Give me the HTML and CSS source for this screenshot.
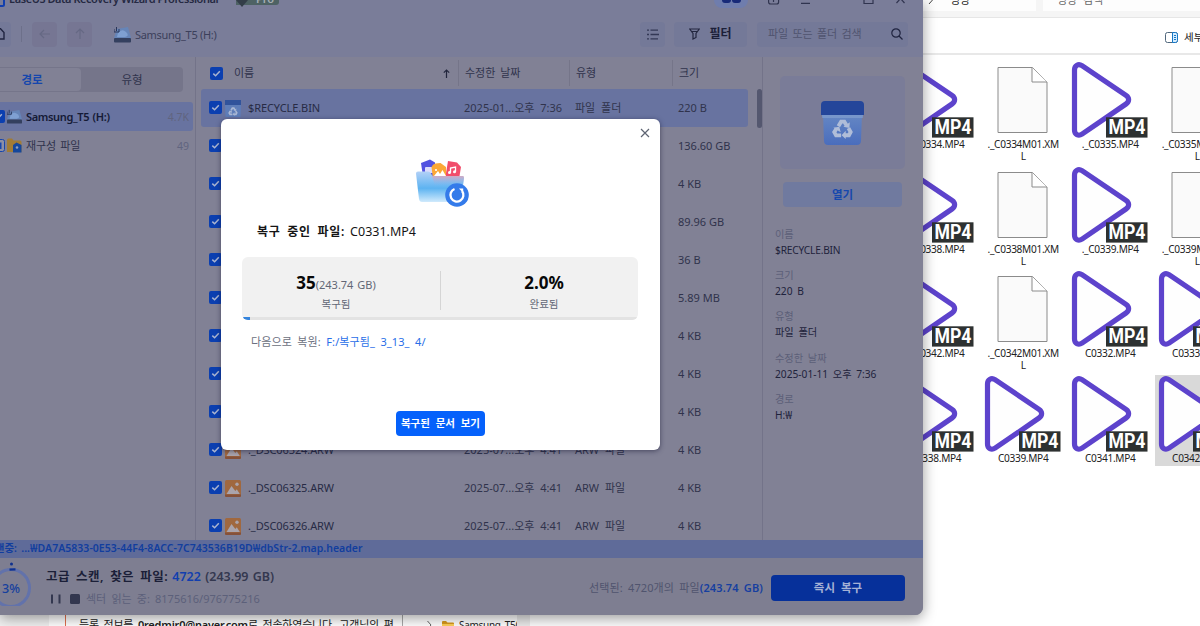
FILE: index.html
```html
<!DOCTYPE html>
<html lang="ko">
<head>
<meta charset="utf-8">
<title>EaseUS Data Recovery Wizard</title>
<link rel="stylesheet" href="styles.css">
</head>
<body>
<svg class="defs" width="0" height="0" aria-hidden="true">
  <defs>
    <linearGradient id="gBin" x1="0" y1="0" x2="0" y2="1"><stop offset="0" stop-color="#6688c4"/><stop offset="1" stop-color="#4a6dbd"/></linearGradient>
    <linearGradient id="gBox" x1="0" y1="0" x2="0" y2="1"><stop offset="0" stop-color="#b3d1f7"/><stop offset=".55" stop-color="#5db3f1"/><stop offset="1" stop-color="#d0eafc"/></linearGradient>
    <linearGradient id="gHot" x1="0" y1="0" x2="0" y2="1"><stop offset="0" stop-color="#d6a6be" stop-opacity=".9"/><stop offset="1" stop-color="#7fb4ee" stop-opacity="0"/></linearGradient>
    <symbol id="check" viewBox="0 0 13 13"><rect width="13" height="13" rx="2" fill="#0b3fb0"/><path d="M3.3 6.6l2.3 2.2 4.2-4.5" fill="none" stroke="#a9b4d0" stroke-width="1.5"/></symbol>
    <symbol id="photo" viewBox="0 0 16 17"><rect width="16" height="17" rx="1.5" fill="#a0683f"/><path d="M0 14.500h16v1a1.500 1.500 0 0 1-1.500 1.500h-13a1.500 1.500 0 0 1-1.500-1.500z" fill="#85513a"/><path d="M1.500 14l5-8 3.800 5 1.500-1.700 3 4.700z" fill="#aaa4ac"/><circle cx="12" cy="4.200" r="1.700" fill="#aaa4ac"/></symbol>
    <symbol id="recycle" viewBox="0 0 24 24"><g fill="none" stroke="currentColor" stroke-width="4.200"><path d="M7.500 9l3-5h3.500l2.500 4.200M18.500 11l2.400 4.300-1.900 3.500h-4.500M10.500 19H5l-2-3.600 2.500-4"/></g><g fill="currentColor"><path d="M13 9.500l6.500 1.500.5-6.500zM15.500 14v9l-4.500-4.300zM2 10.500l6.500-1 1.500 6z"/></g></symbol>
    <symbol id="bin" viewBox="0 0 43 44"><path d="M2 12h39l-1 28q-.3 4-4 4H7q-3.700 0-4-4z" fill="url(#gBin)"/><path d="M0 14V4q0-4 4-4h35q4 0 4 4v10z" fill="#24469a"/><path d="M1 14h41l-.3 3H1.300z" fill="#7796cb"/></symbol>
    <symbol id="drive" viewBox="0 0 17 17"><path d="M3 3l11-2 3 11H0z" fill="#6685b8"/><path d="M4 7q4-5 8-1t-1 5H3z" fill="#7fa0d2"/><rect y="12" width="17" height="4.500" rx="1" fill="#34405f"/><path d="M2.500 1v4M0 3v3h5V3" fill="none" stroke="#28365a"/></symbol>
    <symbol id="mp4" viewBox="0 0 80 80"><path d="M5.500 9v60c0 4.700 4 6.500 7.500 4.200l44-30.200c3.500-2.400 3.500-6.200 0-8.600L13 4.700C9.500 2.300 5.500 4.300 5.500 9z" fill="#fefefe" stroke="#5d43cc" stroke-width="5.200"/><rect x="37" y="56.300" width="41.500" height="20.300" fill="#2d3131"/><text x="39.500" y="73" textLength="37" lengthAdjust="spacingAndGlyphs" class="mp4-text">MP4</text></symbol>
    <symbol id="doc" viewBox="0 0 80 80"><path d="M15.500 6.500H50L64.500 21v50.500h-49z" transform="translate(.5 0)" fill="#fafafa" stroke="#8b8b8b"/><path d="M50 6.500v14.500h15" fill="#fff" stroke="#8b8b8b"/></symbol>
  </defs>
</svg>

<main class="desktop">
  <section class="explorer">
    <div class="ex-address"><div class="ex-path"><svg width="6" height="8" viewBox="0 0 6 8"><path d="M1 0l3.500 4L1 8" fill="none" stroke="#444"/></svg><span>영상</span></div><div class="ex-search">영상 검색</div></div>
    <div class="ex-tools"><svg width="13" height="11" viewBox="0 0 13 11"><rect x=".5" y=".5" width="12" height="10" rx="2" fill="#fff" stroke="#50677c"/><path d="M7.500.5h3a2 2 0 0 1 2 2v6a2 2 0 0 1-2 2h-3z" fill="#d6edff" stroke="#1677c5"/><path d="M9 3.500h2M9 5.500h2M9 7.500h2" stroke="#1677c5"/></svg><span>세부</span></div>
    <div class="ex-grid">
      <div class="file"><svg><use href="#mp4"/></svg><span>._C0334.MP4</span></div>
      <div class="file"><svg><use href="#doc"/></svg><span>._C0334M01.XM<br>L</span></div>
      <div class="file"><svg><use href="#mp4"/></svg><span>._C0335.MP4</span></div>
      <div class="file"><svg><use href="#doc"/></svg><span>._C0335M01.XM<br>L</span></div>
      <div class="file"><svg><use href="#mp4"/></svg><span>._C0338.MP4</span></div>
      <div class="file"><svg><use href="#doc"/></svg><span>._C0338M01.XM<br>L</span></div>
      <div class="file"><svg><use href="#mp4"/></svg><span>._C0339.MP4</span></div>
      <div class="file"><svg><use href="#doc"/></svg><span>._C0339M01.XM<br>L</span></div>
      <div class="file"><svg><use href="#mp4"/></svg><span>._C0342.MP4</span></div>
      <div class="file"><svg><use href="#doc"/></svg><span>._C0342M01.XM<br>L</span></div>
      <div class="file"><svg><use href="#mp4"/></svg><span>C0332.MP4</span></div>
      <div class="file"><svg><use href="#mp4"/></svg><span>C0333.MP4</span></div>
      <div class="file"><svg><use href="#mp4"/></svg><span>C0338.MP4</span></div>
      <div class="file"><svg><use href="#mp4"/></svg><span>C0339.MP4</span></div>
      <div class="file"><svg><use href="#mp4"/></svg><span>C0341.MP4</span></div>
      <div class="file picked"><svg><use href="#mp4"/></svg><span>C0342.MP4</span></div>
    </div>
  </section>

  <section class="behind">
    <div class="mail"><p>등록 정보를 <b>0redmir0@naver.com</b>로 전송하였습니다. 고객님의 편</p></div>
    <div class="nav-tree"><svg width="5" height="8" viewBox="0 0 5 8"><path d="M.5 0L4 4 .5 8" fill="none" stroke="#666"/></svg><svg width="12" height="10" viewBox="0 0 12 10"><path d="M0 1q0-1 1-1h3l1.500 1.500H11q1 0 1 1V10H0z" fill="#d99a1e"/><path d="M0 3h12v7H0z" fill="#ffd058"/></svg><span>Samsung_T5(H:)</span></div>
    <div class="nav-edge"></div>
  </section>

  <section class="app">
    <header class="titlebar">
      <svg width="5" height="10" viewBox="0 0 5 10"><path d="M0 6h2.500q1.500 0 1.500-1.500V0" fill="none" stroke="#123fae" stroke-width="2"/></svg>
      <span class="app-name">EaseUS Data Recovery Wizard Professional</span>
      <span class="badge"><svg width="12" height="9" viewBox="0 0 12 9"><path d="M0 2h12L6 9z" fill="#333d48"/></svg><b>Pro</b></span>
      <span class="avatar"><i></i><i></i></span>
      <svg class="win-icons" width="140" height="10" viewBox="0 0 140 10"><g fill="none" stroke="#30344f" stroke-width="1.200"><path d="M.6 0v4q0 2 2 2h6q2 0 2-2V0M5.500 0v4M33 5.300h9M96 0v5.500h9V0"/><path d="M128.500 5l4-4.500 4 4.500"/></g></svg>
    </header>
    <div class="toolbar">
      <span class="tool home"><svg width="6" height="12" viewBox="0 0 6 12"><path d="M-2 .8L.5.8 4 4.500V11h-6" fill="none" stroke="#202440" stroke-width="1.400"/></svg></span>
      <i class="tool-sep"></i>
      <span class="tool nav"><svg width="12" height="12" viewBox="0 0 12 12"><path d="M11 6H1.500M5 2L1 6l4 4" fill="none" stroke="#666984" stroke-width="1.200"/></svg></span>
      <span class="tool nav"><svg width="12" height="12" viewBox="0 0 12 12"><path d="M6 11V1.500M2 5l4-4 4 4" fill="none" stroke="#666984" stroke-width="1.200"/></svg></span>
      <span class="crumb"><svg width="17" height="17"><use href="#drive"/></svg><span>Samsung_T5 (H:)</span></span>
      <span class="tool list"><svg width="12" height="11" viewBox="0 0 12 11"><path d="M0 1.200h2M3.500 1.200H11M0 5.500h2M3.500 5.500H12M0 9.800h2M3.500 9.800H11" stroke="#333855" stroke-width="1.300"/></svg></span>
      <span class="tool filter"><svg width="11" height="12" viewBox="0 0 11 12"><path d="M.7 1h9.600L7 5.500v4L4 11V5.500z" fill="none" stroke="#22263f" stroke-width="1.200"/><path d="M3 3.500h5" stroke="#22263f"/></svg><b>필터</b></span>
      <span class="tool search"><span>파일 또는 폴더 검색</span><svg width="12" height="12" viewBox="0 0 12 12"><circle cx="5" cy="5" r="4.200" fill="none" stroke="#202440" stroke-width="1.200"/><path d="M8 8l3.500 3.500" stroke="#202440" stroke-width="1.200"/></svg></span>
    </div>

    <div class="body">
      <aside class="side">
        <div class="tabs"><b class="tab on">경로</b><span class="tab">유형</span></div>
        <div class="node sel"><svg class="cb" width="13" height="13"><use href="#check"/></svg><svg width="15" height="15"><use href="#drive"/></svg><b>Samsung_T5 (H:)</b><em>4.7K</em></div>
        <div class="node"><svg class="cb" width="13" height="13" viewBox="0 0 13 13"><rect x=".5" y=".5" width="12" height="12" rx="2" fill="#8c8fa5" stroke="#1746ad"/><rect x="3" y="3.500" width="6.500" height="6.500" fill="#1746ad"/></svg><svg width="15" height="15" viewBox="0 0 15 15"><path d="M0 2q0-1.500 1.500-1.500H5L6.500 2.500H13q1.500 0 1.500 1.500v10H0z" fill="#a17c36"/><path d="M6 7l3.500-2.500 5 2.500V14.500H6z" fill="#15479b"/><circle cx="10" cy="9.500" r="1.300" fill="#8fa0c0"/></svg><span class="node-name">재구성 파일</span><em>49</em></div>
      </aside>

      <div class="table">
        <div class="thead"><svg width="13" height="13"><use href="#check"/></svg><span class="h-name">이름</span><svg class="sort" width="7" height="9" viewBox="0 0 7 9"><path d="M3.500 9V1M.8 3.700l2.700-2.700 2.700 2.700" fill="none" stroke="#22263d" stroke-width="1.200"/></svg><span class="h-date">수정한 날짜</span><span class="h-type">유형</span><span class="h-size">크기</span></div>
        <div class="row on"><svg width="13" height="13"><use href="#check"/></svg><span class="bin-small"><svg width="16" height="17" viewBox="0 0 16 17"><path d="M0 0h16v5H0z" fill="#31539b"/><path d="M0 5h16l-.5 12H.5z" fill="#5e7db8"/><g transform="translate(3 6.500)" color="#aab8d4"><use href="#recycle" width="10" height="10"/></g></svg></span><span class="name">$RECYCLE.BIN</span><span class="date">2025-01...오후 7:36</span><span class="type">파일 폴더</span><span class="size">220 B</span></div>
        <div class="row"><svg width="13" height="13"><use href="#check"/></svg><i></i><span class="name"></span><span class="date"></span><span class="type"></span><span class="size">136.60 GB</span></div>
        <div class="row"><svg width="13" height="13"><use href="#check"/></svg><i></i><span class="name"></span><span class="date"></span><span class="type"></span><span class="size">4 KB</span></div>
        <div class="row"><svg width="13" height="13"><use href="#check"/></svg><i></i><span class="name"></span><span class="date"></span><span class="type"></span><span class="size">89.96 GB</span></div>
        <div class="row"><svg width="13" height="13"><use href="#check"/></svg><i></i><span class="name"></span><span class="date"></span><span class="type"></span><span class="size">36 B</span></div>
        <div class="row"><svg width="13" height="13"><use href="#check"/></svg><i></i><span class="name"></span><span class="date"></span><span class="type"></span><span class="size">5.89 MB</span></div>
        <div class="row"><svg width="13" height="13"><use href="#check"/></svg><i></i><span class="name"></span><span class="date"></span><span class="type"></span><span class="size">4 KB</span></div>
        <div class="row"><svg width="13" height="13"><use href="#check"/></svg><i></i><span class="name"></span><span class="date"></span><span class="type"></span><span class="size">4 KB</span></div>
        <div class="row"><svg width="13" height="13"><use href="#check"/></svg><i></i><span class="name"></span><span class="date"></span><span class="type"></span><span class="size">4 KB</span></div>
        <div class="row"><svg width="13" height="13"><use href="#check"/></svg><svg width="16" height="17"><use href="#photo"/></svg><span class="name">._DSC06324.ARW</span><span class="date">2025-07...오후 4:41</span><span class="type">ARW 파일</span><span class="size">4 KB</span></div>
        <div class="row"><svg width="13" height="13"><use href="#check"/></svg><svg width="16" height="17"><use href="#photo"/></svg><span class="name">._DSC06325.ARW</span><span class="date">2025-07...오후 4:41</span><span class="type">ARW 파일</span><span class="size">4 KB</span></div>
        <div class="row"><svg width="13" height="13"><use href="#check"/></svg><svg width="16" height="17"><use href="#photo"/></svg><span class="name">._DSC06326.ARW</span><span class="date">2025-07...오후 4:41</span><span class="type">ARW 파일</span><span class="size">4 KB</span></div>
      </div>
      <i class="scroll"></i>

      <aside class="detail">
        <div class="preview"><svg width="43" height="44" viewBox="0 0 43 44"><use href="#bin"/><g transform="translate(10.500 17)" color="#b0bdd8"><use href="#recycle" width="22" height="22"/></g></svg></div>
        <b class="open">열기</b>
        <dl>
          <dt>이름</dt><dd class="latin">$RECYCLE.BIN</dd>
          <dt>크기</dt><dd>220 B</dd>
          <dt>유형</dt><dd>파일 폴더</dd>
          <dt>수정한 날짜</dt><dd>2025-01-11 오후 7:36</dd>
          <dt>경로</dt><dd>H:₩</dd>
        </dl>
      </aside>
    </div>

    <div class="scanning"><span>스캔중: ...₩DA7A5833-0E53-44F4-8ACC-7C743536B19D₩dbStr-2.map.header</span></div>
    <footer class="foot">
      <svg class="ring" width="40" height="44" viewBox="-9 0 40 44"><circle cx="11" cy="26" r="18.500" fill="none" stroke="#6272ab" stroke-width="3"/><path d="M9.500 7.600l6-.3" stroke="#10318f" stroke-width="2.200"/><circle cx="11.500" cy="2" r="1.500" fill="#10318f"/><text x="2" y="31" class="ring-text" textLength="18" lengthAdjust="spacingAndGlyphs">3%</text></svg>
      <div class="progress"><div class="p-title"><span class="found">고급 스캔, 찾은 파일:</span> <b>4722</b> <span class="total">(243.99 GB)</span></div>
      <div class="p-sub"><svg width="29" height="10" viewBox="0 0 29 10"><path d="M1 .5v9M8.500 .5v9" stroke="#33374f" stroke-width="2"/><rect x="19" width="10" height="10" rx="1.500" fill="#33374f"/></svg><span>섹터 읽는 중: 8175616/976775216</span></div></div>
      <div class="chosen">선택된: 4720개의 파일<b>(243.74 GB)</b></div>
      <b class="recover">즉시 복구</b>
    </footer>

    <div class="modal">
      <svg class="close" width="10" height="10" viewBox="0 0 10 10"><path d="M1 1l8 8M9 1L1 9" stroke="#5e6472" stroke-width="1.200"/></svg>
      <svg class="hero" width="56" height="52" viewBox="0 0 56 52">
        <path d="M6 4l9-3.500 5 3v14H8z" fill="#5252e0"/><rect x="10" y="8" width="9" height="6" rx="1" fill="#dcdcfb"/>
        <path d="M33 2l9 1.500 4 4.500-2 12H30z" fill="#f14d6b"/><path d="M35.500 13.500V9l5-1v4.800" fill="none" stroke="#fff" stroke-width="1.300"/><circle cx="34.500" cy="13.500" r="1.500" fill="#fff"/><circle cx="39.500" cy="12.800" r="1.500" fill="#fff"/>
        <path d="M16.500 8q1-3 4-3.500l5-.5 5.500 4v12H18z" fill="#fba736"/><path d="M19 17l4-5 2 3 2.500-4L31 17z" fill="#fff"/><circle cx="21" cy="11" r="1.100" fill="#fff"/>
        <path d="M1 14.500q0-2 2-2h10q2 0 3 2l.8 1.500q.5 1 2 1H47q2 0 2 2l-3 22q-.3 2-2 2H7q-2.500 0-3-3z" fill="url(#gBox)"/><path d="M17 17h31q1 0 1 2l-1 8H20z" fill="url(#gHot)"/>
        <circle cx="42" cy="36" r="11.800" fill="#347bea"/><path d="M39.500 30A6.500 6.500 0 1 0 47 32" fill="none" stroke="#fff" stroke-width="2.300"/><path d="M44 29.500h4.200v4.500z" fill="#fff"/>
      </svg>
      <div class="m-title"><b>복구 중인 파일:</b><span>C0331.MP4</span></div>
      <div class="stats">
        <div class="stat"><div class="big"><b>35</b><span>(243.74 GB)</span></div><small>복구됨</small></div>
        <i class="stat-sep"></i>
        <div class="stat"><div class="big"><b>2.0%</b></div><small>완료됨</small></div>
        <div class="bar"><i style="width:2%"></i></div>
      </div>
      <div class="dest">다음으로 복원: <span>F:/복구됨_ 3_13_ 4/</span></div>
      <b class="view">복구된 문서 보기</b>
    </div>
  </section>
</main>
</body>
</html>
```
FILE: styles.css
```css
* { box-sizing: border-box; }
body { margin: 0; width: 1200px; height: 626px; overflow: hidden; background: #fff; font-family: "Noto Sans", "Noto Sans CJK KR", sans-serif; font-size: 11px; line-height: 16px; color: #222; }
b { font-weight: 600; }
em, i { font-style: normal; }
svg { display: block; flex: none; }
.defs { position: absolute; }
.desktop { position: relative; width: 1200px; height: 626px; overflow: hidden; }

/* file explorer */
.explorer { position: absolute; left: 892px; top: 0; width: 349px; height: 626px; background: #fff; }
.ex-address { display: flex; height: 18px; background: #f5f5f5; border-bottom: 1px solid #e6e6e6; gap: 7px; padding-left: 10px; }
.ex-path, .ex-search { height: 11px; background: #fdfdfd; }
.ex-path { display: flex; width: 135px; padding-left: 26px; gap: 16px; }
.ex-path svg { margin-top: -4px; }
.ex-path span, .ex-search { line-height: 0; }
.ex-search { width: 200px; padding-left: 14px; color: #666; word-spacing: 3px; }
.ex-tools { display: flex; align-items: center; gap: 6px; height: 37px; border-bottom: 2px solid #e8e8e8; padding: 3px 0 0 273px; }
.ex-tools span { font-size: 10.5px; white-space: nowrap; }
.ex-grid { display: grid; grid-template-columns: repeat(4, 87.1px); grid-auto-rows: 104.5px; margin-top: 6px; }
.file { padding-left: 3px; }
.file svg { width: 80px; height: 80px; }
.file span { display: block; margin: -4px 0 0 -2px; text-align: center; font-size: 10.1px; line-height: 12px; letter-spacing: -.3px; white-space: nowrap; padding-top: 1px; }
.picked { background: #d9d9d9; height: 91px; margin-left: 2px; padding-left: 1px; }
.mp4-text { font: 700 20px Roboto, sans-serif; fill: #fff; }

/* windows showing under the app */
.behind { position: absolute; left: 0; top: 605px; width: 920px; height: 21px; display: flex; background: #f1f1f1; padding-left: 49px; }
.mail { width: 354px; background: #fff; border-right: 1px solid #aaa; padding-left: 16px; overflow: hidden; }
.mail p { margin: 0; padding: 12px 0 0 13px; border-left: 1px solid #e2714f; white-space: nowrap; font-size: 11px; letter-spacing: -.2px; word-spacing: 2px; }
.nav-tree { display: flex; align-items: flex-start; width: 114px; background: #fff; padding: 16px 0 0 24px; gap: 10px; overflow: hidden; font-size: 10px; }
.nav-tree span { margin: -4px 0 0 -5px; white-space: nowrap; letter-spacing: -.3px; }
.nav-edge { width: 13px; background: #ebebeb; }
.behind::after { content: ""; flex: 1; background: #fdfdfd; }

/* recovery app */
.app { position: absolute; left: 0; top: 0; width: 923px; height: 615px; display: flex; flex-direction: column; background: #818195; border-radius: 0 0 8px 0; box-shadow: 0 3px 14px rgba(0,0,0,.4); color: #30334c; white-space: nowrap; }
.titlebar { display: flex; align-items: flex-start; height: 14px; background: #7a7d99; }
.app-name { font-weight: 600; font-size: 11px; margin: -9px 0 0 4px; width: 227px; letter-spacing: -.45px; color: #252942; }
.badge { display: flex; height: 5px; width: 43px; background: #4e6264; border-radius: 0 0 3px 0; color: #a5afb4; }
.badge svg { margin-top: -2px; }
.badge b { margin: -9px 0 0 8px; font-size: 11px; }
.avatar { display: flex; justify-content: center; gap: 1px; width: 34px; height: 8px; margin: 0 19px 0 435px; background: #6f7dad; border-radius: 0 0 17px 17px; }
.avatar i { width: 9px; height: 3px; background: #182a78; border-radius: 0 0 4px 4px; }
.win-icons { margin: -2px 0 0 1px; }
.toolbar { display: flex; align-items: center; height: 43px; padding-bottom: 3px; background: #7a7d99; }
.tool { display: flex; align-items: center; justify-content: center; flex: none; height: 25px; background: #747998; border-radius: 4px; }
.home { width: 11px; justify-content: flex-start; border-radius: 0 4px 4px 0; }
.tool-sep { width: 1px; height: 16px; background: #6d708a; margin: 0 10px; }
.nav { width: 25px; background: #767693; margin-right: 10px; }
.crumb { display: flex; flex: none; align-items: center; gap: 4px; margin-left: 12px; width: 526px; font-size: 11px; letter-spacing: -.3px; color: #3c405b; }
.crumb span { margin-top: 1px; }
.list { width: 25px; }
.filter { width: 73px; gap: 9px; margin: 0 10px 0 9px; font-size: 12px; color: #1c2039; }
.search { width: 151px; justify-content: space-between; padding: 0 5px 0 11px; color: #50546f; }
.search span { font-size: 11px; word-spacing: 1.4px; }
.body { display: flex; height: 483px; }

.side { width: 196px; border-right: 1px solid #737389; padding-top: 10px; }
.tabs { display: flex; width: 183px; height: 25px; background: #75758a; border-radius: 0 4px 4px 0; padding: 1px 0; margin-bottom: 10px; }
.tab { flex: 1; text-align: center; line-height: 24px; font-size: 11.5px; }
.tab.on { flex: none; width: 81px; padding-right: 17px; background: #818195; border-radius: 0 4px 4px 0; color: #1547ad; }
.node { display: flex; align-items: center; height: 29px; width: 193px; padding-right: 4px; font-size: 11px; }
.node.sel { background: #6873a0; border-radius: 0 3px 3px 0; color: #151a36; }
.node b { margin-left: 4px; font-size: 11px; letter-spacing: -.35px; word-spacing: 1px; }
.node-name { margin-left: 4px; word-spacing: 1.5px; letter-spacing: -.1px; }
.cb { margin: 0 2px 0 -8px; }
.node em { margin-left: auto; color: #60647f; font-size: 10.5px; }

.table { width: 552px; padding-left: 5px; height: 483px; overflow: hidden; }
.thead { display: flex; align-items: center; height: 32px; padding-left: 9px; font-size: 11px; }
.h-name { width: 209px; margin-left: 11px; }
.sort { margin: 0 8px 0 0; }
.h-date, .h-type, .h-size { height: 26px; line-height: 25px; border-left: 1px solid #757589; padding-left: 6px; word-spacing: 2px; }
.h-date { width: 111px; }
.h-type { width: 103px; }
.row { display: flex; align-items: center; height: 38px; width: 547px; padding-left: 8px; gap: 3px; font-size: 11px; }
.row > svg:first-child { margin-top: -1px; }
.row.on { background: #6873a0; border-radius: 3px; }
.row > i { width: 16px; }
.row .name { width: 213px; margin-left: 4px; letter-spacing: -.1px; color: #272b45; }
.row .date { width: 108px; word-spacing: 3px; }
.row .type { width: 100px; word-spacing: 3px; }
.scroll { width: 5px; height: 39px; margin: 32px 0 0 9px; background: #54576f; border-radius: 3px; }
.detail { flex: 1; border-left: 1px solid #737389; padding: 19px 18px 0 17px; }
.preview { display: flex; justify-content: center; align-items: center; height: 93px; background: #7a7c98; border-radius: 5px; }
.open { display: block; margin: 13px 3px 0; height: 25px; line-height: 25px; text-align: center; background: #707a9f; border-radius: 4px; color: #1648ad; font-size: 11.5px; }
dl { margin: 19px 0 0 -5px; font-size: 10.2px; line-height: 16px; word-spacing: 2px; }
dt { color: #5c5f78; }
dd { margin: 0 0 9.200px; color: #1f233c; }
.latin { letter-spacing: -.2px; }

.scanning { height: 18px; background: #5f6b99; overflow: hidden; }
.scanning span { display: block; margin-left: -15px; font-weight: 600; font-size: 10.5px; line-height: 17px; word-spacing: 1.5px; letter-spacing: .03px; color: #123e9e; }
.foot { display: flex; align-items: center; height: 57px; padding-top: 2px; background: #7e7e91; border-radius: 0 0 8px 0; }
.ring { margin: 2px 0 0 -9px; align-self: flex-start; }
.ring-text { font: 500 12.500px "Noto Sans", sans-serif; fill: #15409e; }
.progress { margin-left: 15px; width: 543px; }
.p-title { font-weight: 600; font-size: 12.5px; line-height: 18px; word-spacing: 1px; color: #1b1f38; }
.found { letter-spacing: .45px; word-spacing: 2.500px; }
.p-title b { color: #123fae; }
.total { color: #34384f; }
.p-sub { display: flex; align-items: center; gap: 6px; margin: 4px 0 0 5px; font-size: 11px; line-height: 18px; word-spacing: 2.300px; color: #5c607a; }
.chosen { width: 182px; font-size: 11px; letter-spacing: .12px; word-spacing: 2.200px; color: #50546e; }
.chosen b { color: #163fa0; }
.recover { width: 134px; height: 26px; line-height: 26px; text-align: center; background: #06309a; border-radius: 4px; color: #a5b2d6; font-size: 11.5px; word-spacing: 3px; }

/* recovery dialog */
.modal { position: absolute; left: 221px; top: 119px; width: 438.5px; height: 330.5px; display: flex; flex-direction: column; background: #fff; border-radius: 6px; box-shadow: 0 1px 5px rgba(20,20,50,.55); }
.close { align-self: flex-end; margin: 9px 9.500px 0 0; }
.hero { margin: 21px 0 0 194px; }
.m-title { display: flex; gap: 5px; margin: 13px 0 0 36px; line-height: 16px; font-size: 12.5px; color: #151515; }
.m-title b { font-size: 12px; letter-spacing: .7px; word-spacing: 3px; }
.stats { display: flex; flex-wrap: wrap; align-content: flex-start; margin: 17px 22px 0 21px; height: 63px; background: #f1f1f1; border-radius: 6px; overflow: hidden; }
.stat { height: 60px; padding-top: 15px; text-align: center; color: #626776; }
.stat:first-child { width: 198px; padding-right: 10px; }
.stat-sep { width: 1px; height: 39px; margin: 14px 10px 0 0; background: #d5d5d5; }
.stat:nth-child(3) { width: 186px; }
.big { line-height: 21px; font-size: 11px; }
.big b { font-size: 17px; font-weight: 700; color: #080808; }
.big span { word-spacing: 1px; }
.stat small { display: block; font-size: 10.5px; line-height: 18px; }
.bar { width: 100%; height: 3px; background: #e3e3e3; }
.bar i { display: block; height: 3px; background: #3584dd; }
.dest { margin: 14px 0 0 30px; font-size: 11px; letter-spacing: .1px; word-spacing: 2.500px; color: #6b7080; }
.dest span { color: #286ee8; }
.view { margin: 61px 0 0 175px; width: 89px; height: 25px; line-height: 24px; text-align: center; background: #0561fb; border-radius: 4px; color: #fff; font-size: 10.5px; word-spacing: 3px; }
```
